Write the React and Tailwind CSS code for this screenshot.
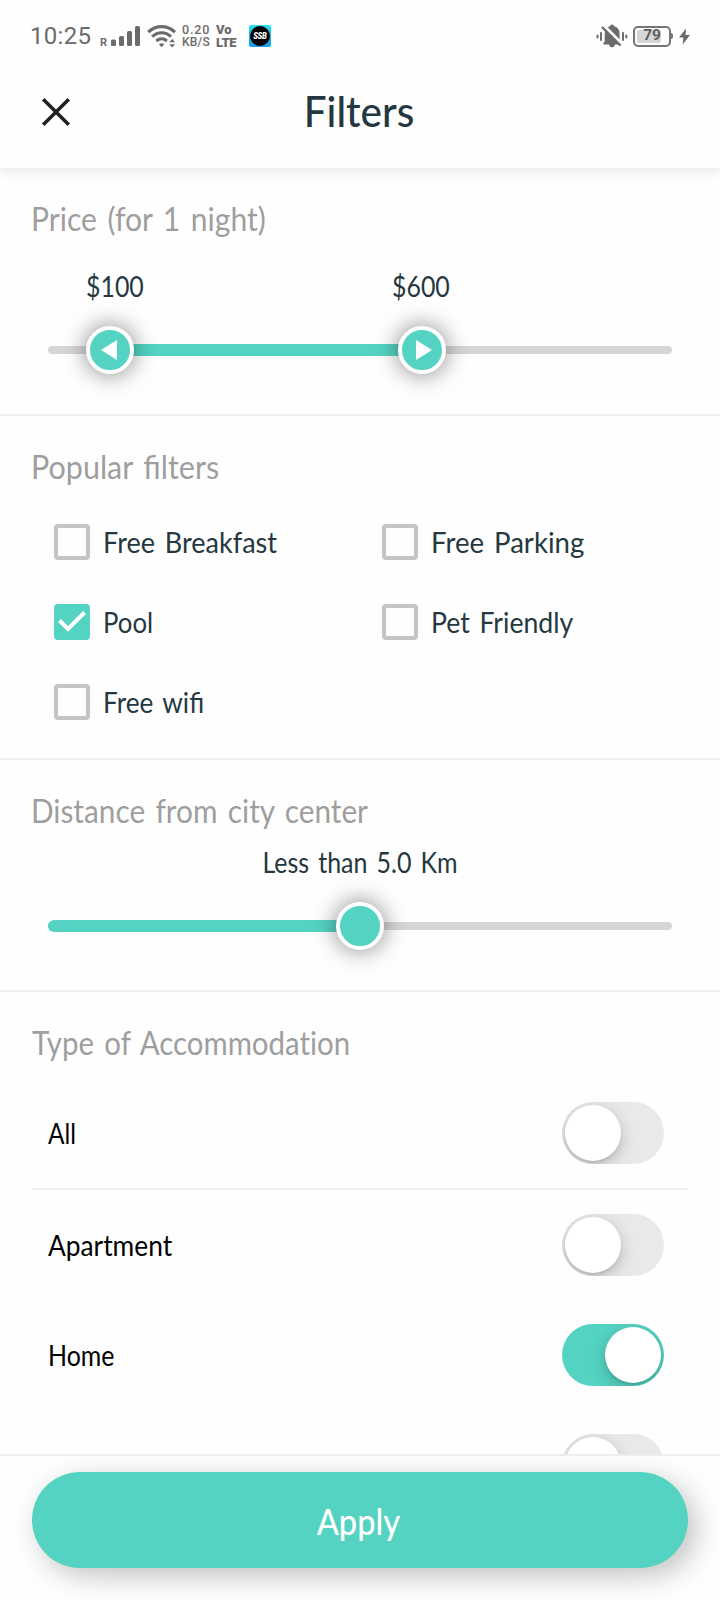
import { useState } from "react";

function StatusBar() {
  return (
    <div className="flex h-[72px] items-center pl-[30px] pr-[30px] font-[Roboto,sans-serif] text-[#6b6b6b]">
      <span className="w-[62px] whitespace-nowrap text-[24px] leading-none tracking-[0.3px]">10:25</span>
      <span className="ml-[8px] mt-[12px] text-[11px] font-bold leading-none">R</span>
      <svg className="ml-[4px]" width="30" height="22" viewBox="0 0 30 22" fill="currentColor">
        <rect x="0" y="14.5" width="5" height="6.5" rx="1.5" />
        <rect x="8" y="11" width="5" height="10" rx="1.5" />
        <rect x="16" y="6" width="5" height="15" rx="1.5" />
        <rect x="24" y="1" width="5" height="20" rx="1.5" />
      </svg>
      <svg className="ml-[6px]" width="30" height="24" viewBox="0 0 30 24" fill="none" stroke="currentColor" strokeWidth="3.1">
        <path d="M1.2 8.2C9 0.8 20.200 0.800 28 8.200" />
        <path d="M5.200 12.600C10.800 7.500 18.400 7.500 24 12.600" />
        <path d="M9.300 17C12.500 14.200 16.700 14.200 19.900 17" />
        <path d="M12 20.200Q14.600 18.200 17.200 20.200L14.600 23.200Z" fill="currentColor" stroke="none" />
        <path d="M22.200 18.200 25.200 15 28.200 18.200ZM22.200 20.200 25.200 23.400 28.200 20.200Z" fill="currentColor" stroke="none" />
      </svg>
      <span className="ml-[5px] flex w-[29px] flex-col whitespace-nowrap font-medium leading-[12px]">
        <span className="text-[12.5px] tracking-[0.8px]">0.20</span>
        <span className="text-[12px] tracking-[0.2px]">KB/S</span>
      </span>
      <span className="ml-[5px] flex w-[23px] flex-col whitespace-nowrap text-[13px] font-black leading-[13px]">
        <span>Vo</span>
        <span className="tracking-[-0.4px]">LTE</span>
      </span>
      <span className="ml-[10px] flex size-[22px] items-center justify-center rounded-[2px] bg-linear-to-b from-[#27e3f5] to-[#1b9bea]">
        <span className="flex size-[20px] items-center justify-center rounded-full bg-black text-[9px] font-black italic leading-none tracking-[-0.3px] text-white">
          <span className="scale-x-[0.85]">SSB</span>
        </span>
      </span>
      <svg className="ml-auto" width="32" height="24" viewBox="0 0 32 24" fill="currentColor">
        <rect x="0.500" y="10.500" width="2" height="4" rx="1" />
        <rect x="4" y="8" width="2" height="9" rx="1" />
        <rect x="26" y="8" width="2" height="9" rx="1" />
        <rect x="29.300" y="10.500" width="2" height="4" rx="1" />
        <path d="M7.500 20.500V18.800L8.700 17.500V10Q8.700 3.600 13.800 2.200Q14.200 0.500 16 0.500Q17.800 0.500 18.200 2.200Q23.600 3.600 23.600 10V17.500L25 18.800V20.500H19Q18.500 23.300 16 23.300Q13.600 23.300 13 20.500Z" />
        <path d="M7.500 1.500 26.500 20.500" stroke="#fff" strokeWidth="3.200" />
        <path d="M6 3 24.500 21.500" stroke="currentColor" strokeWidth="2.400" />
      </svg>
      <span className="ml-[5px] flex h-[21px] w-[38px] items-center rounded-[5px] border-2 border-[#757575] p-[2px]">
        <span className="flex h-full w-[24px] items-center justify-end rounded-[2px] bg-[#d6d6d6] text-[15.5px] font-bold leading-none text-[#5e5e5e]">
          79
        </span>
      </span>
      <span className="h-[6px] w-[2px] rounded-r-sm bg-[#757575]" />
      <svg className="ml-[6px]" width="11" height="17" viewBox="0 0 11 17" fill="currentColor">
        <path d="M7 0.500 0 9.500H4.300L3.700 16.500 11 7H6.500Z" />
      </svg>
    </div>
  );
}

function Header() {
  return (
    <header className="relative z-10 h-[168px] shrink-0 bg-[#fefefe] shadow-[0_2px_12px_rgba(0,0,0,0.11)]">
      <StatusBar />
      <div className="grid h-20 grid-cols-[112px_1fr_112px] items-center">
        <button className="flex justify-center" aria-label="Close">
          <svg width="30" height="30" viewBox="0 0 30 30" fill="none" stroke="#212121" strokeWidth="3.500">
            <path d="M2.200 2.200 27.800 27.800M27.800 2.200 2.200 27.800" />
          </svg>
        </button>
        <h1 className="mb-[3px] mr-[2px] origin-center scale-x-[0.94] text-center text-[43px] font-medium leading-[46px] text-[#253840]">
          Filters
        </h1>
      </div>
    </header>
  );
}

function Heading({ children, className }) {
  return (
    <h2 className={`h-9 origin-left whitespace-nowrap text-[33px] leading-9 text-[#9e9e9e] [word-spacing:3px] ${className}`}>
      {children}
    </h2>
  );
}

function Thumb({ className, children }) {
  return (
    <span
      className={`absolute top-0 flex size-12 items-center justify-center rounded-full border-4 border-white bg-[#54d3c2] shadow-[0_0_22px_2px_rgba(0,0,0,0.4)] ${className}`}
    >
      {children}
    </span>
  );
}

function Slider({ fill, children }) {
  return (
    <div className="relative mx-12 mt-[27px] grid h-12 items-center">
      <div className="col-start-1 row-start-1 h-2 rounded-full bg-[#d6d6d6]" />
      <div className={`col-start-1 row-start-1 h-3 bg-[#54d3c2] ${fill}`} />
      {children}
    </div>
  );
}

function Option({ label, initial = false, textClass }) {
  const [on, setOn] = useState(initial);
  return (
    <button className="flex h-9 items-center gap-[13px]" role="checkbox" aria-checked={on} onClick={() => setOn(!on)}>
      {on ? (
        <span className="flex size-9 items-center justify-center rounded-[4px] bg-[#54d3c2]">
          <svg width="36" height="36" viewBox="0 0 36 36" fill="none" stroke="#fff" strokeWidth="4">
            <path d="M5.500 16.500 14 25 30.500 8.500" />
          </svg>
        </span>
      ) : (
        <span className="size-9 rounded-[4px] border-4 border-[#c4c4c4]" />
      )}
      <span className={`origin-left whitespace-nowrap text-[28px] leading-9 text-[#253840] [word-spacing:3px] ${textClass}`}>
        {label}
      </span>
    </button>
  );
}

function Toggle({ on }) {
  return (
    <span
      className={`flex h-[62px] w-[102px] items-center overflow-hidden rounded-full px-[3px] ${
        on ? "justify-end bg-[#54d3c2]" : "bg-[#e9e9e9]"
      }`}
    >
      <span className="size-14 rounded-full bg-white shadow-[0_5px_16px_rgba(0,0,0,0.22),0_2px_2px_rgba(0,0,0,0.08)]" />
    </span>
  );
}

function TypeRow({ label, initial = false, textClass }) {
  const [on, setOn] = useState(initial);
  return (
    <button
      className="flex h-[110px] w-full items-center justify-between pl-4 pr-6"
      role="switch"
      aria-checked={on}
      onClick={() => setOn(!on)}
    >
      <span className={`origin-left text-[28px] leading-9 text-black ${textClass}`}>{label}</span>
      <Toggle on={on} />
    </button>
  );
}

export default function App() {
  return (
    <div className="flex h-[1600px] w-[720px] flex-col overflow-hidden bg-[#fefefe] font-[Lato,sans-serif]">
      <Header />
      <main className="min-h-0 flex-1 overflow-hidden">
        <section className="h-[248px] border-b-2 border-[#eeeeee] pt-8">
          <Heading className="ml-[31px] scale-x-[0.912]">Price (for 1 night)</Heading>
          <div className="mt-[36px] flex h-[27px] pl-[86px] text-[28px] leading-7 text-[#253840]">
            <span className="w-[306px] origin-left scale-x-[0.89]">$100</span>
            <span className="origin-left scale-x-[0.89]">$600</span>
          </div>
          <Slider fill="ml-[62px] mr-[250px]">
            <Thumb className="left-[38px]">
              <svg className="mr-[3px]" width="16" height="20" viewBox="0 0 16 20" fill="#fff">
                <path d="M16 0V20L0 10Z" />
              </svg>
            </Thumb>
            <Thumb className="left-[350px]">
              <svg className="ml-[3px]" width="16" height="20" viewBox="0 0 16 20" fill="#fff">
                <path d="M0 0V20L16 10Z" />
              </svg>
            </Thumb>
          </Slider>
        </section>

        <section className="h-[344px] border-b-2 border-[#eeeeee] pt-8">
          <Heading className="ml-[31px] scale-x-[0.924]">Popular filters</Heading>
          <div className="mt-10 grid grid-cols-[328px_1fr] gap-y-11 pl-[54px]">
            <Option label="Free Breakfast" textClass="scale-x-[0.966]" />
            <Option label="Free Parking" textClass="scale-x-[0.985]" />
            <Option label="Pool" initial textClass="scale-x-[0.92]" />
            <Option label="Pet Friendly" textClass="scale-x-[0.95]" />
            <Option label="Free wifi" textClass="scale-x-[0.935]" />
          </div>
        </section>

        <section className="h-[232px] border-b-2 border-[#eeeeee] pt-8">
          <Heading className="ml-[31px] scale-x-[0.902]">Distance from city center</Heading>
          <p className="mt-[20px] h-[27px] scale-x-[0.892] text-center text-[28px] leading-7 text-[#253840] [word-spacing:3px]">
            Less than 5.0 Km
          </p>
          <Slider fill="mr-[312px] rounded-l-full">
            <Thumb className="left-[288px]" />
          </Slider>
        </section>

        <section className="px-8 pt-8">
          <Heading className="scale-x-[0.892] [font-variant-ligatures:none]">Type of Accommodation</Heading>
          <div className="mt-[18px] border-b-2 border-[#eeeeee]">
            <TypeRow label="All" textClass="scale-x-[0.87]" />
          </div>
          <TypeRow label="Apartment" textClass="scale-x-[0.94]" />
          <TypeRow label="Home" initial textClass="scale-x-[0.89]" />
          <TypeRow label="Villa" textClass="mb-[3px] scale-x-[0.89]" />
        </section>
      </main>

      <footer className="h-[146px] shrink-0 overflow-hidden border-t-2 border-[#eeeeee] bg-[#fefefe] px-8 pt-4">
        <button className="flex h-24 w-full items-center justify-center rounded-full bg-[#54d3c2] text-[37px] font-medium leading-none text-white shadow-[8px_8px_28px_rgba(0,0,0,0.24)]">
          <span className="mr-[3px] scale-x-[0.88]">Apply</span>
        </button>
      </footer>
    </div>
  );
}
